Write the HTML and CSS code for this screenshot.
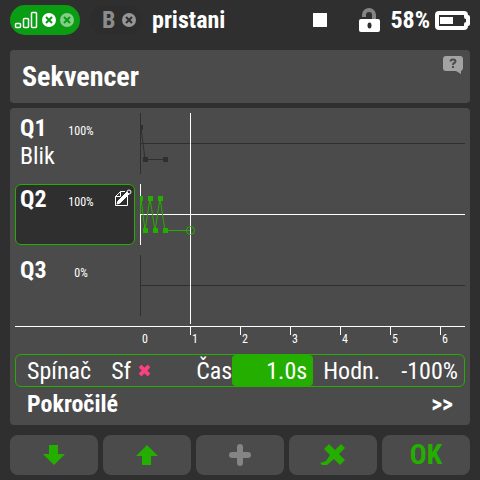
FILE: index.html
```html
<!doctype html>
<html lang="cs">
  <head>
    <title>Sekvencer</title>
    <meta charset="UTF-8" />
    <meta name="viewport" content="width=device-width, initial-scale=1" />
    <link rel="stylesheet" href="styles.css">
  </head>

  <body>
    <header class="status">
      <div class="link link-a">
        <svg width="66" height="24" viewBox="0 0 66 24">
          <g fill="none" stroke="#fff" stroke-width="1.5">
            <rect x="2.5" y="15.5" width="5" height="4" rx="1" />
            <rect x="10.5" y="10.5" width="5" height="9" rx="1" />
            <rect x="18.5" y="4.5" width="5" height="15" rx="1" />
          </g>
          <circle cx="36" cy="12" r="7" fill="#fff" />
          <path d="M33 9l6 6M39 9l-6 6" stroke="#0a9c12" stroke-width="2" />
          <circle cx="54" cy="12" r="7" fill="#86cd89" />
          <path d="M51 9l6 6M57 9l-6 6" stroke="#0a9c12" stroke-width="2" />
        </svg>
      </div>
      <div class="link link-b">
        <span>B</span>
        <svg width="14" height="14" viewBox="0 0 14 14">
          <circle cx="7" cy="7" r="7" fill="#969696" />
          <path d="M4 4l6 6M10 4l-6 6" stroke="#2f2f2f" stroke-width="2" />
        </svg>
      </div>
      <span class="model">pristani</span>
      <svg class="stop" width="14" height="14"><rect width="14" height="14" fill="#fff" /></svg>
      <svg class="lock" width="21" height="24" viewBox="0 0 21 24">
        <path d="M5 9V7A5 5 0 0 1 15 7V12" fill="none" stroke="#858585" stroke-width="4" />
        <rect y="11" width="21" height="13" rx="2" fill="#fff" />
        <ellipse cx="10.5" cy="17.5" rx="2" ry="3" fill="#2f2f2f" />
      </svg>
      <span class="percent">58%</span>
      <svg width="35" height="19" viewBox="0 0 35 19">
        <path d="M4 2H29Q31 2 31 4V6H33V13H31V15Q31 17 29 17H4Q2 17 2 15V4Q2 2 4 2Z" fill="none" stroke="#fff" stroke-width="4" stroke-linejoin="round" />
        <rect x="5" y="6" width="13" height="7" fill="#fff" />
      </svg>
    </header>

    <main>
      <section class="panel title">
        <h1>Sekvencer</h1>
        <button class="help" type="button" aria-label="Help">
          <svg width="20" height="19" viewBox="0 0 20 19">
            <path d="M3 0H17Q20 0 20 3V12Q20 14 18 15V18L13 15H3Q0 15 0 12V3Q0 0 3 0Z" fill="#a3a3a3" />
            <path d="M7.5 5.5Q7.5 3.5 10 3.5Q12.5 3.5 12.5 5.5Q12.5 6.5 10.5 7.5Q10 8 10 9" fill="none" stroke="#4b4b4b" stroke-width="2" />
            <rect x="9" y="10" width="2" height="2" fill="#4b4b4b" />
          </svg>
        </button>
      </section>

      <section class="panel editor">
        <div class="sequences">
          <div class="channels">
            <button class="channel" type="button">
              <b>Q1</b><small>100%</small>
              <span class="name">Blik</span>
            </button>
            <button class="channel selected" type="button">
              <b>Q2</b><small>100%</small>
              <svg class="edit" width="17" height="18" viewBox="0 0 17 18">
                <path d="M10 2.5H5.5L.5 7.500V16.5H12.5V7M.5 7.500H5.5V2.5" fill="none" stroke="#fff" />
                <path d="M2 15L3 12L12 3L14 5L5 14Z" fill="#fff" stroke="#fff" />
                <circle cx="14" cy="3" r="2" fill="none" stroke="#fff" />
              </svg>
            </button>
            <button class="channel" type="button">
              <b>Q3</b><small>0%</small>
            </button>
          </div>
          <svg class="graph" width="100%" height="213">
            <g class="idle">
              <path d="M.5 0V61M.5 142V203" />
              <line x1="0" y1="30.5" x2="100%" y2="30.5" />
              <line x1="0" y1="172.5" x2="100%" y2="172.5" />
              <path d="M1 14.5L5 46.5H25" />
              <path class="dots" d="M0 12h3v5H0zM3 44h5v5H3zM23 44h5v5H23z" />
            </g>
            <g class="axis">
              <path d="M.5 71V132" />
              <line x1="0" y1="101.5" x2="100%" y2="101.5" />
            </g>
            <g class="active">
              <path d="M.5 85.5V101M1 85.5L5 117.5L10 85.5L15 117.5L20 85.5L25 117.5H50" />
              <path class="dots" d="M0 83h3v5H0zM3 115h5v5H3zM8 83h5v5H8zM13 115h5v5H13zM18 83h5v5H18zM23 115h5v5H23z" />
            </g>
            <path class="axis" d="M50.5 0V211" />
            <circle class="active" cx="50.5" cy="117.5" r="4" />
          </svg>
        </div>
        <svg class="scale" width="100%" height="28">
          <line x1="0" y1=".5" x2="100%" y2=".5" />
          <path d="M175.5 1v8M225.5 1v8M275.5 1v8M325.5 1v8M375.5 1v8M425.5 1v8" />
          <text x="127" y="17">0</text>
          <text x="177" y="17">1</text>
          <text x="227" y="17">2</text>
          <text x="277" y="17">3</text>
          <text x="327" y="17">4</text>
          <text x="377" y="17">5</text>
          <text x="427" y="17">6</text>
        </svg>

        <form class="fields">
          <label for="switch">Spínač</label>
          <button id="switch" type="button">
            Sf
            <svg width="11" height="11" viewBox="0 0 11 11">
              <path d="M1 1l9 9M10 1l-9 9" stroke="#ff3f80" stroke-width="4" />
            </svg>
          </button>
          <label class="time-label" for="time">Čas</label>
          <input id="time" type="text" value="1.0s" />
          <label class="value-label" for="value">Hodn.</label>
          <input id="value" type="text" value="-100%" />
        </form>
        <button class="advanced" type="button"><span>Pokročilé</span><span>&gt;&gt;</span></button>
      </section>
    </main>

    <nav class="keys">
      <button type="button" aria-label="Down">
        <svg width="22" height="20" viewBox="0 0 22 20"><path d="M6 0h9v9h7L11 20L0 9h6z" /></svg>
      </button>
      <button type="button" aria-label="Up">
        <svg width="22" height="20" viewBox="0 0 22 20"><path d="M11 0L22 11h-7v9H6v-9H0z" /></svg>
      </button>
      <button class="add" type="button" aria-label="Add" disabled>
        <svg width="22" height="22" viewBox="0 0 22 22"><path d="M11 3v16M3 11h16" stroke="#858585" stroke-width="6" stroke-linecap="round" /></svg>
      </button>
      <button type="button" aria-label="Delete">
        <svg width="26" height="22" viewBox="0 0 26 22"><path d="M9 0L15 6L21 0L25 4L19 10L25 16L20 21L14 15L7 21H2L0 19L6 17L10 11L4 5Z" /></svg>
      </button>
      <button class="ok" type="button">OK</button>
    </nav>
  </body>
</html>
```
FILE: styles.css
```css
* {
  box-sizing: border-box;
}

body {
  margin: 0;
  padding: 0 10px 5px;
  background-color: #2f2f2f;
  color: #fff;
  font-family: 'Roboto Condensed', 'Liberation Sans Narrow', Roboto, sans-serif;
  font-size: 24px;
  line-height: 28px;
}

svg {
  display: block;
  flex: none;
}

button,
input {
  margin: 0;
  padding: 0;
  border: none;
  background: none;
  color: inherit;
  font: inherit;
}

.status {
  display: flex;
  align-items: center;
  height: 40px;
  margin-bottom: 10px;
  font-weight: bold;
}

.link {
  display: flex;
  align-items: center;
  height: 30px;
  border-radius: 15px;
}

.link-a {
  width: 70px;
  padding-left: 3px;
  background-color: #0a9c12;
}

.link-b {
  gap: 7px;
  width: 52px;
  margin-left: 10px;
  padding-left: 12px;
  background-color: #2d2d2d;
  color: #8c8c8c;
}

.model {
  margin-left: 10px;
}

.stop {
  margin-left: auto;
}

.lock {
  margin-left: 32px;
}

.percent {
  margin: 0 5px 0 10px;
}

.panel {
  border-radius: 4px;
  background-color: #4b4b4b;
}

.title {
  display: flex;
  justify-content: space-between;
  align-items: center;
  height: 53px;
  margin-bottom: 5px;
  padding: 0 7px 0 12px;
}

h1 {
  margin: 0;
  font-size: 28px;
}

.help {
  align-self: flex-start;
  margin-top: 6px;
}

.editor {
  padding: 5px;
}

.sequences {
  display: grid;
  grid-template-columns: 120px 1fr;
  gap: 5px;
}

.channels {
  display: grid;
  grid-template-columns: 120px;
  grid-template-rows: repeat(3, 61px);
  gap: 10px;
}

.channel {
  display: grid;
  grid-template-columns: 35px 52px 1fr;
  grid-template-rows: 28px 28px;
  align-items: center;
  padding: 0 4px 4px;
  border: 1px solid transparent;
  border-radius: 6px;
  text-align: left;
}

.channel small {
  padding-top: 6px;
  font-size: 12px;
  text-align: center;
}

.name {
  grid-column: 1 / 4;
}

.selected {
  border-color: #24ae00;
  background-color: #2f2f2f;
}

.edit {
  align-self: start;
  margin: 4px 0 0 8px;
}

.graph path,
.graph line,
.graph circle {
  fill: none;
}

.idle {
  stroke: #2f2f2f;
}

.active {
  stroke: #24ae00;
}

.axis,
.scale {
  stroke: #fff;
}

.graph .idle .dots {
  fill: #2f2f2f;
  stroke: none;
}

.graph .active .dots {
  fill: #24ae00;
  stroke: none;
}

.scale text {
  fill: #fff;
  stroke: none;
  font-size: 12px;
}

.fields {
  display: flex;
  align-items: center;
  height: 33px;
  padding-left: 11px;
  border: 1px solid #24ae00;
  border-radius: 6px;
}

#switch {
  display: flex;
  align-items: center;
  gap: 8px;
  margin-left: 20px;
}

.time-label {
  margin-left: auto;
}

.fields input {
  height: 31px;
  padding-right: 6px;
  text-align: right;
}

#time {
  width: 81px;
  border-radius: 4px;
  background-color: #24ae00;
}

.value-label {
  margin-left: 10px;
}

#value {
  width: 84px;
}

.advanced {
  display: flex;
  justify-content: space-between;
  align-items: center;
  width: 100%;
  height: 33px;
  padding: 0 12px;
  font-weight: bold;
}

.keys {
  display: grid;
  grid-template-columns: repeat(5, 1fr);
  gap: 5px;
  margin-top: 10px;
}

.keys button {
  display: flex;
  justify-content: center;
  align-items: center;
  height: 40px;
  border-radius: 8px;
  background-color: #4b4b4b;
  fill: #24ae00;
}

.keys .ok {
  color: #24ae00;
  font-size: 28px;
  font-weight: bold;
}
```
